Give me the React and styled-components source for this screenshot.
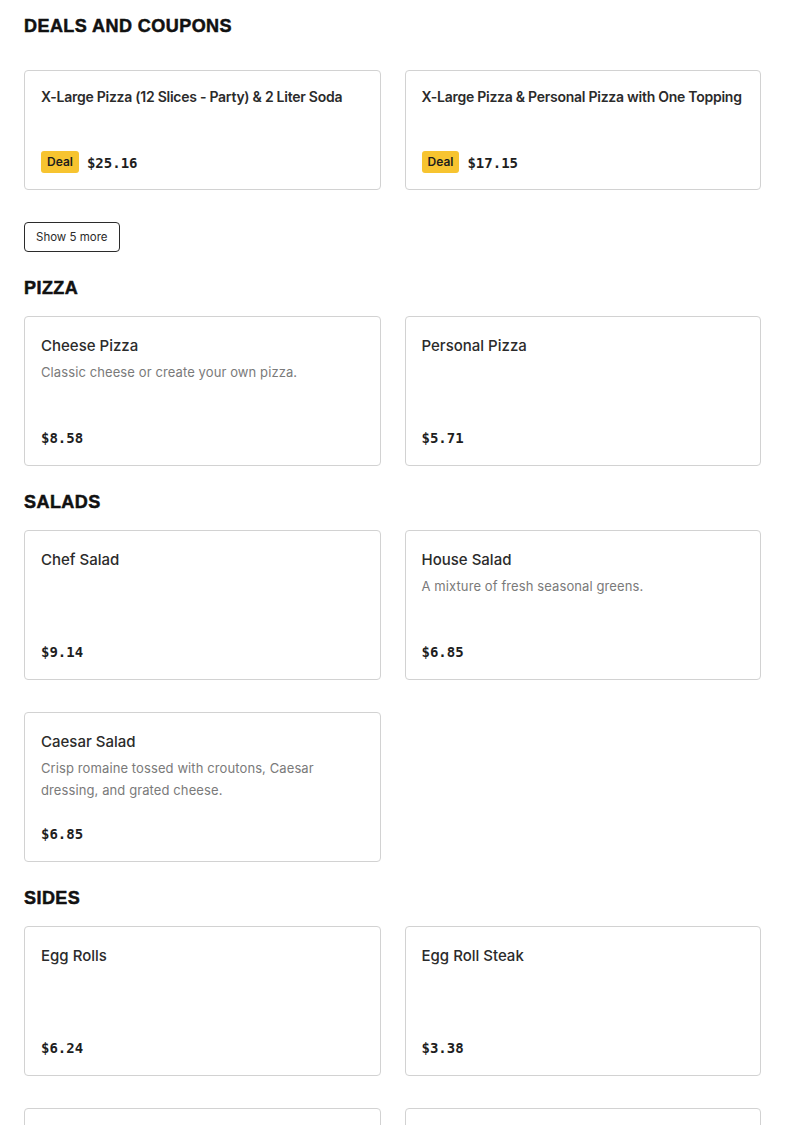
import styled, { createGlobalStyle } from "styled-components";

const GlobalStyle = createGlobalStyle`
  body {
    margin: 0;
    background: #fff;
    font-family: Inter, "Liberation Sans", sans-serif;
    color: #2b2b2b;
  }
`;

const sections = [
  {
    title: "Deals and Coupons",
    deals: true,
    items: [
      { name: "X-Large Pizza (12 Slices - Party) & 2 Liter Soda", price: "$25.16" },
      { name: "X-Large Pizza & Personal Pizza with One Topping", price: "$17.15" },
    ],
    more: 5,
  },
  {
    title: "Pizza",
    items: [
      { name: "Cheese Pizza", desc: "Classic cheese or create your own pizza.", price: "$8.58" },
      { name: "Personal Pizza", price: "$5.71" },
    ],
  },
  {
    title: "Salads",
    items: [
      { name: "Chef Salad", price: "$9.14" },
      { name: "House Salad", desc: "A mixture of fresh seasonal greens.", price: "$6.85" },
      {
        name: "Caesar Salad",
        desc: "Crisp romaine tossed with croutons, Caesar dressing, and grated cheese.",
        price: "$6.85",
      },
    ],
  },
  {
    title: "Sides",
    items: [
      { name: "Egg Rolls", price: "$6.24" },
      { name: "Egg Roll Steak", price: "$3.38" },
      { name: "", price: "" },
      { name: "", price: "" },
    ],
  },
];

const App = () => {
  return (
    <Page>
      <GlobalStyle />
      {sections.map((s) => (
        <Section key={s.title}>
          <Heading $deals={s.deals}>{s.title}</Heading>
          <Grid>
            {s.items.map((item, i) =>
              s.deals ? (
                <DealCard key={i}>
                  <DealName>{item.name}</DealName>
                  <PriceRow>
                    <Badge>Deal</Badge>
                    <Price>{item.price}</Price>
                  </PriceRow>
                </DealCard>
              ) : (
                <Card key={i}>
                  <Name>{item.name}</Name>
                  {item.desc && <Desc>{item.desc}</Desc>}
                  <Price>{item.price}</Price>
                </Card>
              )
            )}
          </Grid>
          {s.more && <MoreButton>Show {s.more} more</MoreButton>}
        </Section>
      ))}
    </Page>
  );
};

const Page = styled.div`
  padding: 14px 24px 0;
  height: 1125px;
  overflow: hidden;
  box-sizing: border-box;
`;

const Section = styled.section`
  margin-bottom: 24px;
`;

const Heading = styled.h2`
  margin: 0 0 ${(p) => (p.$deals ? "32px" : "16px")};
  font-family: "Liberation Sans", Arial, sans-serif;
  font-weight: 900;
  font-size: 18px;
  line-height: 24px;
  letter-spacing: 0.45px;
  -webkit-text-stroke: 0.5px #111;
  text-transform: uppercase;
  color: #111;
`;

const Grid = styled.div`
  display: grid;
  grid-template-columns: 1fr 1fr;
  column-gap: 24px;
  row-gap: 32px;
`;

const CardBase = styled.div`
  border: 1px solid #d2d2d2;
  border-radius: 4px;
  background: #fff;
  padding: 16px 16px 17px;
  display: flex;
  flex-direction: column;
  box-sizing: border-box;
`;

const Card = styled(CardBase)`
  min-height: 150px;
`;

const DealCard = styled(CardBase)`
  min-height: 120px;
  padding-bottom: 16px;
`;

const Name = styled.div`
  font-size: 15px;
  font-weight: 500;
  line-height: 24px;
  margin-top: 1px;
  margin-bottom: -1px;
  color: #2b2b2b;
`;

const DealName = styled.div`
  font-size: 14px;
  font-weight: 600;
  line-height: 20px;
  letter-spacing: -0.26px;
  white-space: nowrap;
  color: #2b2b2b;
`;

const Desc = styled.div`
  margin-top: 4px;
  font-size: 13px;
  line-height: 22px;
  letter-spacing: 0.1px;
  color: #7a7a7a;
`;

const PriceRow = styled.div`
  margin-top: auto;
  display: flex;
  align-items: center;
  gap: 8px;
`;

const Badge = styled.span`
  background: #f7c430;
  color: #1e1e1e;
  border-radius: 3px;
  font-size: 12px;
  font-weight: 600;
  line-height: 22px;
  padding: 0 6px;
`;

const Price = styled.div`
  margin-top: auto;
  font-family: "DejaVu Sans Mono", "Liberation Mono", monospace;
  font-weight: 700;
  font-size: 14px;
  line-height: 20px;
  color: #1e1e1e;
  min-height: 20px;
`;

const MoreButton = styled.button`
  margin-top: 32px;
  height: 30px;
  padding: 0 11px;
  border: 1px solid #2b2b2b;
  border-radius: 4px;
  background: #fff;
  font-family: Inter, "Liberation Sans", sans-serif;
  font-size: 11.5px;
  color: #2b2b2b;
  cursor: pointer;
`;

export default App;
